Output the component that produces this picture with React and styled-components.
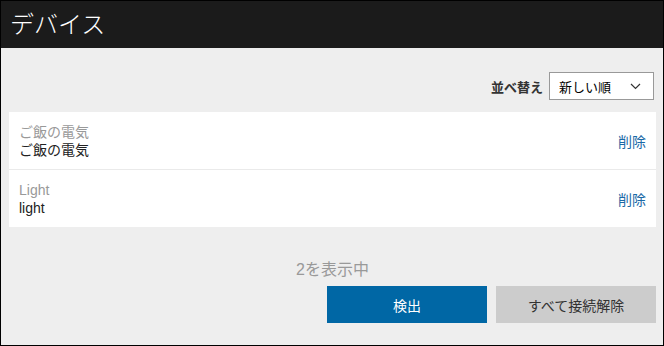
import React, { useState } from "react";
import styled, { createGlobalStyle } from "styled-components";

const GlobalStyle = createGlobalStyle`
  html, body {
    margin: 0;
    padding: 0;
    background: #fff;
  }
  body {
    font-family: "Liberation Sans", "Noto Sans CJK JP", sans-serif;
  }
`;

const Frame = styled.div`
  width: 664px;
  height: 346px;
  box-sizing: border-box;
  border: 1px solid #000;
  background: #eeeeee;
  display: flex;
  flex-direction: column;
`;

const Header = styled.div`
  height: 47px;
  background: #1b1b1b;
  color: #fff;
  display: flex;
  align-items: center;
  padding: 0 9px 4px;
  box-sizing: border-box;
  font-size: 24px;
  font-family: "Noto Sans CJK JP", sans-serif;
  font-weight: 300;
`;

const Body = styled.div`
  flex: 1;
  padding: 24px 7px 0 8px;
  display: flex;
  flex-direction: column;
`;

const SortRow = styled.div`
  display: flex;
  justify-content: flex-end;
  align-items: center;
  gap: 6px;
  height: 28px;
  margin-bottom: 12px;
  padding-right: 2px;
`;

const SortLabel = styled.span`
  font-size: 13px;
  font-weight: bold;
  color: #333;
`;

const Select = styled.div`
  width: 105px;
  height: 28px;
  box-sizing: border-box;
  border: 1px solid #999;
  background: #fff;
  display: flex;
  align-items: center;
  justify-content: space-between;
  padding: 0 12px 0 9px;
  font-size: 13px;
  color: #000;
`;

const List = styled.div`
  background: #fff;
`;

const Row = styled.div`
  height: 57px;
  display: flex;
  align-items: center;
  justify-content: space-between;
  padding: 0 10px;
  border-bottom: ${(p) => (p.$last ? "none" : "1px solid #eaeaea")};
`;

const Names = styled.div`
  display: flex;
  flex-direction: column;
`;

const Title = styled.span`
  font-size: 14px;
  line-height: 18px;
  color: ${(p) => (p.$muted ? "#999" : "#222")};
`;

const DeleteLink = styled.a`
  font-size: 14px;
  color: #1a69a6;
  cursor: pointer;
  text-decoration: none;
`;

const Count = styled.div`
  margin-top: 33px;
  text-align: center;
  font-size: 16px;
  line-height: 20px;
  color: #999;
`;

const Buttons = styled.div`
  margin-top: 6px;
  display: flex;
  justify-content: flex-end;
  gap: 9px;
`;

const Button = styled.button`
  width: 160px;
  height: 37px;
  border: none;
  font-family: "Liberation Sans", "Noto Sans CJK JP", sans-serif;
  font-size: 14px;
  background: ${(p) => (p.$primary ? "#0067a5" : "#cccccc")};
  color: ${(p) => (p.$primary ? "#fff" : "#333")};
  cursor: pointer;
`;

const Chevron = () => (
  <svg width="11" height="7" viewBox="0 0 11 7">
    <path d="M1 1l4.5 4.5L10 1" fill="none" stroke="#333" strokeWidth="1.2" />
  </svg>
);

const devices = [
  { id: 1, name: "ご飯の電気", label: "ご飯の電気" },
  { id: 2, name: "Light", label: "light" },
];

export default function App() {
  const [items] = useState(devices);

  return (
    <>
      <GlobalStyle />
      <Frame>
        <Header>デバイス</Header>
        <Body>
          <SortRow>
            <SortLabel>並べ替え</SortLabel>
            <Select>
              新しい順
              <Chevron />
            </Select>
          </SortRow>
          <List>
            {items.map((d, i) => (
              <Row key={d.id} $last={i === items.length - 1}>
                <Names>
                  <Title $muted>{d.name}</Title>
                  <Title>{d.label}</Title>
                </Names>
                <DeleteLink>削除</DeleteLink>
              </Row>
            ))}
          </List>
          <Count>{items.length}を表示中</Count>
          <Buttons>
            <Button $primary>検出</Button>
            <Button>すべて接続解除</Button>
          </Buttons>
        </Body>
      </Frame>
    </>
  );
}
